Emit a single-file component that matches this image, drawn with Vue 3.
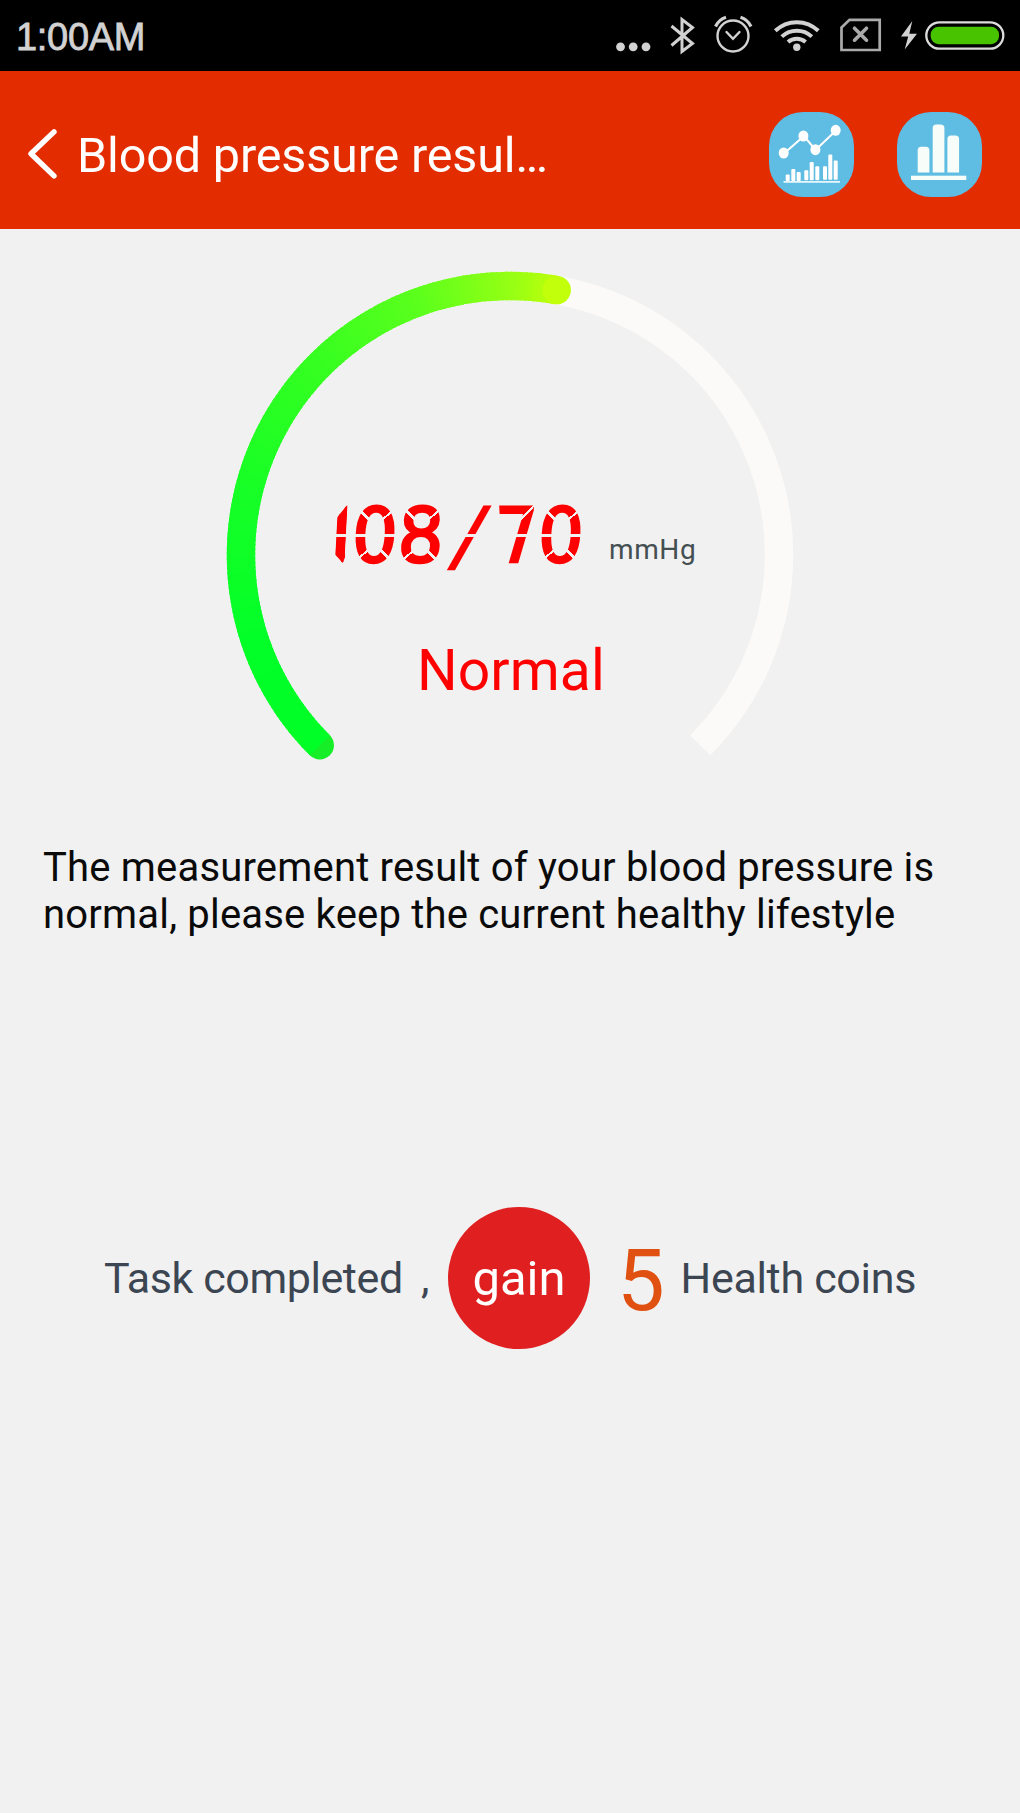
<script setup>
const CX = 284
const CY = 284
const R = 269

const polar = (deg) => {
  const a = (deg * Math.PI) / 180
  return [CX + R * Math.sin(a), CY - R * Math.cos(a)]
}
const arc = (from, to) => {
  const [x1, y1] = polar(from)
  const [x2, y2] = polar(to)
  return `M${x1.toFixed(2)} ${y1.toFixed(2)}A${R} ${R} 0 ${to - from > 180 ? 1 : 0} 1 ${x2.toFixed(2)} ${y2.toFixed(2)}`
}

// Colour stops of the sweep, keyed by clock angle in degrees
const stops = [
  [-135, [0, 255, 38]],
  [-110, [2, 255, 40]],
  [-75, [24, 255, 38]],
  [-45, [54, 255, 32]],
  [-20, [92, 255, 28]],
  [0, [150, 255, 20]],
  [12, [202, 255, 8]],
]
const colorAt = (deg) => {
  let i = 1
  while (i < stops.length - 1 && deg > stops[i][0]) i++
  const [a, ca] = stops[i - 1]
  const [b, cb] = stops[i]
  const t = Math.min(1, Math.max(0, (deg - a) / (b - a)))
  return `rgb(${ca.map((c, k) => Math.round(c + (cb[k] - c) * t)).join(',')})`
}

const START = -135
const END = 10
const slices = []
for (let d = START; d < END; d += 1) {
  slices.push({ d: arc(d, Math.min(END, d + 1.6)), color: colorAt(d) })
}
const [sx, sy] = polar(START)
const [ex, ey] = polar(END)

const reading = [
  { ch: '1', kind: 'one' },
  { ch: '0', kind: 'full' },
  { ch: '8', kind: 'eight' },
  { ch: '/', kind: 'slash' },
  { ch: '7', kind: 'seven' },
  { ch: '0', kind: 'full' },
]
</script>

<template>
  <div class="screen">
    <div class="status">
      <span class="time">1:00AM</span>
      <svg class="status-icons" width="420" height="71" viewBox="0 0 420 71" fill="none">
        <g fill="#d2d2d2">
          <circle cx="20.5" cy="46.8" r="4.4" />
          <circle cx="33.2" cy="46.8" r="4.4" />
          <circle cx="46" cy="46.8" r="4.4" />
        </g>
        <path d="M71.5 26 92.5 43.5 82 51.5V19.5L92.5 27.5 71.5 45.5" stroke="#d2d2d2" stroke-width="3" />
        <g stroke="#d2d2d2">
          <circle cx="133" cy="36" r="15.5" stroke-width="2.4" />
          <path d="M126.5 32 133 38.8 139.5 32" stroke-width="2.4" stroke-linecap="round" />
          <path d="M115.500 26.500Q119 19.500 126 17.300M151 26.500Q147.500 19.500 140.500 17.300" stroke-width="3.200" />
        </g>
        <g stroke="#d2d2d2" stroke-width="4">
          <path d="M175.300 30.800A31 31 0 0 1 218.300 30.800" />
          <path d="M181.800 36.600A22 22 0 0 1 211.800 36.600" />
          <path d="M188 42A13.500 13.500 0 0 1 205.600 42" />
        </g>
        <circle cx="196.800" cy="47.200" r="3.700" fill="#d2d2d2" />
        <g stroke="#aaaaaa">
          <path d="M241.500 27.500 249.500 19.800H279.700V50H241.500Z" stroke-width="2.700" />
          <path d="M254.500 28.200 266.500 40.200M266.500 28.200 254.500 40.200" stroke-width="3.600" stroke-linecap="round" />
        </g>
        <path d="M312.300 21 301 36.500H308.200L304.700 49.500 317 33.800H309.300Z" fill="#d2d2d2" />
        <rect x="326.300" y="22.300" width="77" height="26.400" rx="13.200" stroke="#dcdcdc" stroke-width="2.300" />
        <rect x="330.700" y="26.700" width="68.300" height="17.500" rx="8" fill="#47c300" />
      </svg>
    </div>

    <header class="bar">
      <svg class="back" width="30" height="50" viewBox="0 0 30 50" fill="none" stroke="#fff" stroke-width="5.400" stroke-linecap="round" stroke-linejoin="round">
        <path d="M26 2.900 3 24.700 26 46.900" />
      </svg>
      <h1 class="title">Blood pressure resul<span class="dots">...</span></h1>
      <svg class="tile" width="85" height="85" viewBox="0 0 85 85">
        <rect width="85" height="85" rx="34" fill="#5fbce2" />
        <path d="M15 41.500 35 24 46.500 38 67 18.500" fill="none" stroke="#fff" stroke-width="2" />
        <g fill="#fff">
          <ellipse cx="14.700" cy="41" rx="5" ry="5.500" />
          <ellipse cx="34.400" cy="24" rx="5" ry="5.500" />
          <ellipse cx="46.400" cy="37.700" rx="5" ry="5.500" />
          <ellipse cx="66.700" cy="18.300" rx="5" ry="5.500" />
          <rect x="16.700" y="62.500" width="4" height="6.500" rx="1" />
          <rect x="22.300" y="57" width="4" height="12" rx="1" />
          <rect x="27.700" y="60" width="4" height="9" rx="1" />
          <rect x="35.300" y="58.300" width="4" height="10" rx="1" />
          <rect x="40.700" y="50" width="4" height="18.300" rx="1" />
          <rect x="46.300" y="54.300" width="4" height="14" rx="1" />
          <rect x="54" y="54.300" width="4" height="13.500" rx="1" />
          <rect x="59.300" y="42.500" width="4" height="25.300" rx="1" />
          <rect x="64.700" y="48.500" width="4" height="19.300" rx="1" />
        </g>
        <rect x="14.500" y="69" width="56.500" height="1.800" fill="#e4f5fb" />
      </svg>
      <svg class="tile" width="85" height="85" viewBox="0 0 85 85">
        <rect width="85" height="85" rx="34" fill="#5fbce2" />
        <g fill="#f7fdf8">
          <path d="M20.700 60.500V38.300Q20.700 34.800 24.200 34.800H28.700Q32.400 34.800 32.400 38.300V60.500Z" />
          <path d="M35.700 60.500V16Q35.700 12.500 39.200 12.500H43.700Q47.400 12.500 47.400 16V60.500Z" />
          <path d="M50.400 60.500V27Q50.400 23.500 53.900 23.500H58.400Q62.100 23.500 62.100 27V60.500Z" />
          <rect x="14" y="63.700" width="55.300" height="4.300" />
        </g>
      </svg>
    </header>

    <main class="content">
      <section class="gauge">
        <svg class="dial" width="568" height="500" viewBox="0 0 568 500" fill="none" stroke-width="28.400">
          <path :d="arc(START, 135)" stroke="#fbfaf8" />
          <circle :cx="sx" :cy="sy" r="14.200" fill="#16ee28" stroke="none" />
          <path v-for="(s, i) in slices" :key="i" :d="s.d" :stroke="s.color" />
          <circle :cx="ex" :cy="ey" r="14.200" :fill="colorAt(END)" stroke="none" />
        </svg>
        <div class="readout">
          <div class="value-row">
            <span class="value"><span v-for="(c, i) in reading" :key="i" class="digit" :class="c.kind">{{ c.ch }}</span></span>
            <span class="unit">mmHg</span>
          </div>
          <div class="verdict">Normal</div>
        </div>
      </section>

      <p class="advice">The measurement result of your blood pressure is<br />normal, please keep the current healthy lifestyle</p>

      <section class="reward">
        <span class="task">Task completed</span>
        <span class="comma">,</span>
        <span class="gain">gain</span>
        <span class="count">5</span>
        <span class="coins">Health coins</span>
      </section>
    </main>
  </div>
</template>

<style>
body {
  margin: 0;
  background: #f1f1f1;
}
</style>

<style scoped>
.screen {
  width: 1020px;
  height: 1813px;
  overflow: hidden;
  background: #f1f1f1;
  font-family: Roboto, "Liberation Sans", sans-serif;
  white-space: nowrap;
}
.status {
  display: flex;
  justify-content: space-between;
  height: 71px;
  background: #000;
}
.time {
  margin-left: 16px;
  font: 38px/75px "Liberation Sans", Arial, sans-serif;
  letter-spacing: -0.3px;
  color: #d2d2d2;
  -webkit-text-stroke: 0.8px #d2d2d2;
}
.status-icons {
  display: block;
}
.bar {
  display: flex;
  align-items: center;
  height: 158px;
  padding: 0 38px 0 28px;
  box-sizing: border-box;
  background: #e32d00;
}
.back {
  margin-top: 8px;
}
.title {
  flex: 1;
  margin: 12px 0 0 19px;
  font-size: 48.5px;
  font-weight: 400;
  line-height: 60px;
  letter-spacing: -0.15px;
  color: #fff;
}
.dots {
  letter-spacing: -2.6px;
}
.tile {
  margin-top: 9px;
}
.tile + .tile {
  margin-left: 43px;
}
.content {
  display: flex;
  flex-direction: column;
}
.gauge {
  display: grid;
  width: 568px;
  height: 500px;
  margin: 42px 0 0 226px;
}
.dial,
.readout {
  grid-area: 1 / 1;
}
.readout {
  padding-top: 224px;
}
.value-row {
  display: flex;
  height: 80px;
  margin-left: 101px;
}
.value {
  display: flex;
  width: 282px;
  font-family: "DejaVu Sans Condensed", "DejaVu Sans", sans-serif;
  font-stretch: condensed;
  font-size: 76px;
  line-height: 81px;
  color: #fe0000;
  -webkit-text-stroke: 2.4px #fe0000;
}
.digit {
  position: relative;
  display: flex;
  flex: none;
  justify-content: center;
  width: 46px;
  height: 80px;
  transform: skewX(-3deg) scaleX(1.05);
}
.digit.one {
  width: 22px;
  margin: 0 1px 0 2px;
  clip-path: polygon(7px 23px, 17px 9px, 17px 62px, 15px 68px, 7px 59px);
}
.digit.slash {
  width: 54px;
  transform: translateX(-1px) skewX(-16deg);
}
.digit.seven {
  width: 40px;
  transform: skewX(3deg);
}
/* Gaps between the segments of each digit */
.digit::after {
  content: "";
  position: absolute;
  inset: 9px 1px;
  background:
    linear-gradient(45deg, transparent 46%, #f1f1f1 46% 54%, transparent 54%) 0 0 / 18px 18px no-repeat,
    linear-gradient(-45deg, transparent 46%, #f1f1f1 46% 54%, transparent 54%) 100% 0 / 18px 18px no-repeat,
    linear-gradient(-45deg, transparent 46%, #f1f1f1 46% 54%, transparent 54%) 0 100% / 18px 18px no-repeat,
    linear-gradient(45deg, transparent 46%, #f1f1f1 46% 54%, transparent 54%) 100% 100% / 18px 18px no-repeat,
    linear-gradient(#f1f1f1, #f1f1f1) 0 50% / 100% 3px no-repeat;
}
.digit.eight::after {
  background-size: 18px 18px, 18px 18px, 18px 18px, 18px 18px, 0 0;
}
.digit.one::after,
.digit.slash::after {
  background: linear-gradient(#f1f1f1, #f1f1f1) 0 50% / 100% 3px no-repeat;
}
.digit.seven::after {
  background:
    linear-gradient(-45deg, transparent 46%, #f1f1f1 46% 54%, transparent 54%) 100% 0 / 18px 18px no-repeat,
    linear-gradient(#f1f1f1, #f1f1f1) 0 50% / 100% 3px no-repeat;
}
.unit {
  margin-top: 38px;
  font-size: 28px;
  line-height: 34px;
  letter-spacing: 0.6px;
  color: #444f52;
}
.verdict {
  margin: 62px 0 0 191px;
  font-size: 57px;
  line-height: 68px;
  letter-spacing: 0.1px;
  color: #fe0000;
}
.advice {
  margin: 73px 0 0 43px;
  font-size: 40px;
  line-height: 47px;
  letter-spacing: 0.19px;
  color: #0a0a0a;
}
.reward {
  display: flex;
  align-items: center;
  height: 142px;
  margin: 269px 0 0 104px;
  color: #3c4653;
  font-size: 43px;
  line-height: 50px;
}
.task {
  width: 317px;
  letter-spacing: -0.42px;
}
.comma {
  width: 26.500px;
}
.gain {
  width: 142px;
  height: 142px;
  border-radius: 50%;
  background: #e01f20;
  color: #fff;
  font-size: 49px;
  line-height: 144px;
  text-align: center;
  text-indent: 1px;
}
.count {
  margin: 6px 0 0 27.500px;
  width: 63.500px;
  font-size: 85px;
  color: #e05010;
}
.coins {
  letter-spacing: -0.3px;
}
</style>
